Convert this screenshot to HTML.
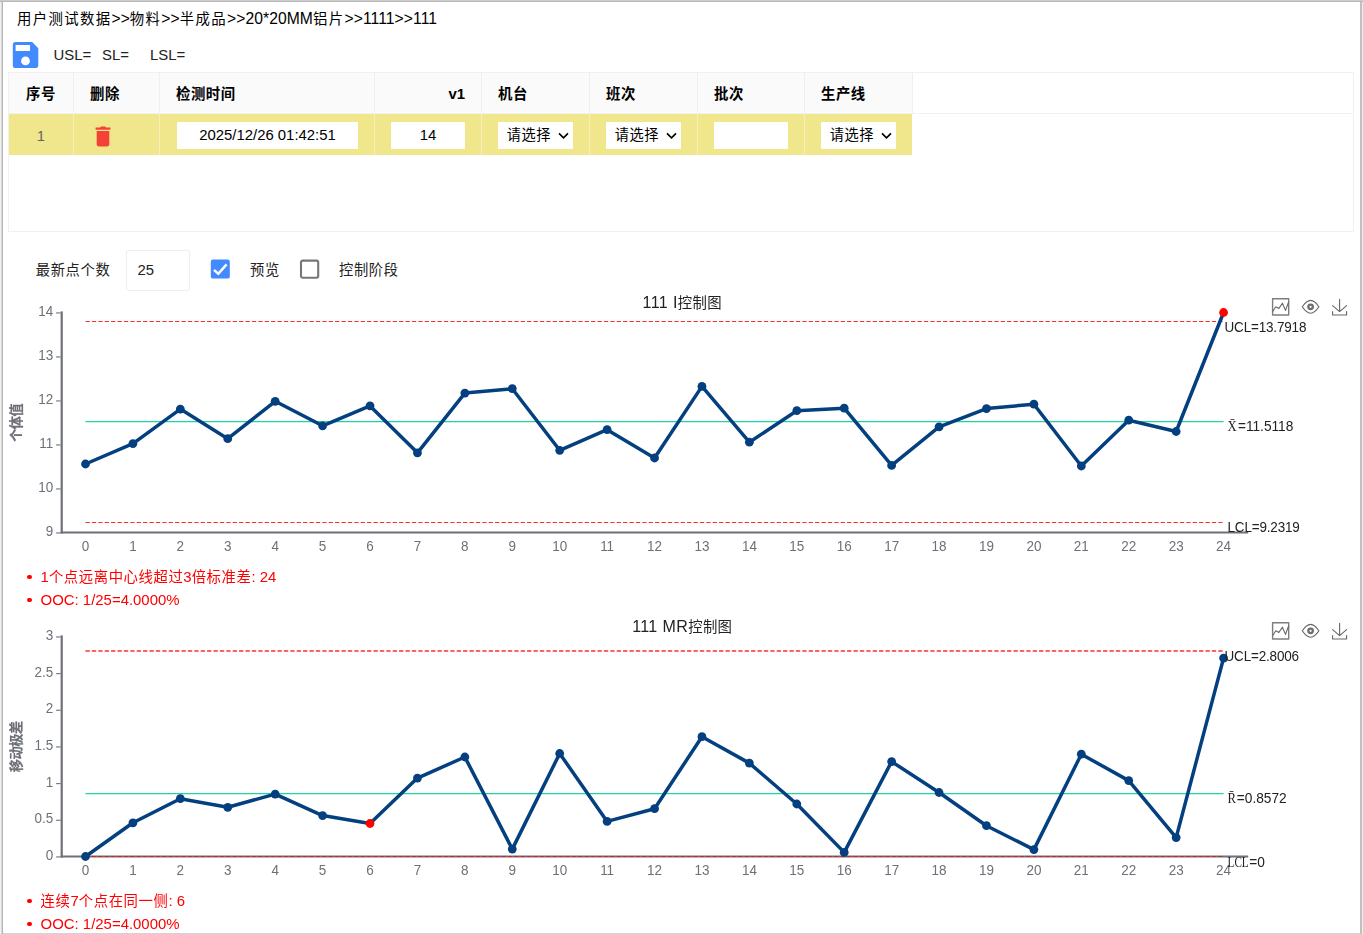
<!DOCTYPE html>
<html lang="zh-CN">
<head>
<meta charset="utf-8">
<title>SPC 控制图</title>
<style>
html,body{margin:0;padding:0;}
body{width:1363px;height:934px;overflow:hidden;background:#fff;position:relative;
 font-family:"Liberation Sans","Noto Sans CJK SC",sans-serif;color:#000;}
.abs{position:absolute;}
.frame{position:absolute;background:#b9b9b9;}
#crumb{left:17px;top:9px;font-size:15.68px;line-height:20px;white-space:nowrap;color:#000;letter-spacing:0.07px;}
.spec{top:45px;font-size:14.93px;line-height:20px;white-space:nowrap;color:#222;}
#tbl{left:8px;top:72px;width:1346px;height:160px;border:1px solid #f0f0f0;box-sizing:border-box;background:#fff;}
.th{position:absolute;top:0;height:41px;background:#fafafa;border-right:1px solid #efefef;border-bottom:1px solid #f2f2f2;box-sizing:border-box;
 font-weight:bold;font-size:14.93px;line-height:42.6px;color:#000;white-space:nowrap;}
.td{position:absolute;top:41px;height:41px;background:#f0e68c;border-right:1px solid #f5efc0;box-sizing:border-box;font-size:14.93px;line-height:43px;color:#666;}
.inp{position:absolute;top:7.8px;height:27.2px;border-radius:1px;background:#fff;color:#000;font-size:14.9px;line-height:27.3px;text-align:center;white-space:nowrap;}
.sel{text-align:left;padding-left:8.4px;box-sizing:border-box;font-size:14.8px;}
.sel svg{position:absolute;right:4.6px;top:10.2px;}
.ctl{top:260px;font-size:14.9px;line-height:20px;white-space:nowrap;color:#222;}
ul.msg{position:absolute;margin:0;padding:0;list-style:none;color:#ff0000;font-size:14.93px;line-height:23.7px;left:25.6px;white-space:nowrap;}
ul.msg li{position:relative;padding-left:15px;height:23.7px;}
ul.msg li:before{content:"";position:absolute;left:1.9px;top:10.1px;width:4.1px;height:4.1px;border-radius:50%;background:#ff0000;}
.c{font-size:0.962em;letter-spacing:0.04em;}
#crumb .c{font-size:0.92em;letter-spacing:0.092em;}
.th .c{font-size:0.965em;letter-spacing:0.036em;}
.ctl .c{font-size:0.96em;letter-spacing:0.042em;}
svg text{font-family:"Liberation Sans","Noto Sans CJK SC",sans-serif;}
.ax{font-size:14.2px;fill:#6E7079;}
.yn{font-size:13.2px;fill:#6E7079;font-weight:bold;stroke:#6E7079;stroke-width:0.2px;}
.yn .c{font-size:13.2px;letter-spacing:-0.5px;}
.tt{font-size:16px;fill:#222;letter-spacing:0.4px;}
.tt .c{font-size:14.4px;letter-spacing:0.3px;}
.ml{font-size:14.2px;fill:#222;letter-spacing:-0.17px;}
.ms{font-size:14.2px;fill:#222;}
svg text.sf{font-family:"Liberation Serif","DejaVu Serif",serif;font-size:13.8px;fill:#222;}
</style>
</head>
<body>
<div class="frame" style="left:0;top:0;width:1363px;height:1px;background:#cdcdcd;"></div>
<div class="frame" style="left:0;top:1px;width:1363px;height:1px;background:#b8b8b8;"></div>
<div class="frame" style="left:0;top:2px;width:1px;height:932px;background:#f1f1f1;"></div>
<div class="frame" style="left:1px;top:2px;width:1px;height:932px;background:#d9d9d9;"></div>
<div class="frame" style="left:2px;top:2px;width:1px;height:932px;background:#b6b6b6;"></div>
<div class="frame" style="left:1360px;top:2px;width:2px;height:932px;background:#c0c0c0;"></div>
<div class="frame" style="left:1362px;top:2px;width:1px;height:932px;background:#ededed;"></div>
<div class="frame" style="left:3px;top:933px;width:1357px;height:1px;background:#d3d3d3;"></div>

<div id="crumb" class="abs"><span class="c">用户测试数据</span>&gt;&gt;<span class="c">物料</span>&gt;&gt;<span class="c">半成品</span>&gt;&gt;20*20MM<span class="c">铝片</span>&gt;&gt;1111&gt;&gt;111</div>

<svg class="abs" style="left:12px;top:41px" width="28" height="28" viewBox="0 0 28 28">
 <path fill="#448aff" d="M3.6 1.1 H20.2 L26.3 7.2 V24.2 Q26.3 27 23.5 27 H3.6 Q0.8 27 0.8 24.2 V3.9 Q0.8 1.1 3.6 1.1 Z M3.6 4 V10 H18 V4 Z M13.5 15.5 A4.4 4.4 0 1 0 13.5 24.3 A4.4 4.4 0 1 0 13.5 15.5 Z" fill-rule="evenodd"/>
</svg>
<div class="abs spec" style="left:53.6px;">USL=</div>
<div class="abs spec" style="left:102px;">SL=</div>
<div class="abs spec" style="left:150px;">LSL=</div>

<div id="tbl" class="abs">
 <div class="th" style="left:0;width:65px;text-align:center;"><span class="c">序号</span></div>
 <div class="th" style="left:65px;width:86px;padding-left:16px;"><span class="c">删除</span></div>
 <div class="th" style="left:151px;width:215px;padding-left:16px;"><span class="c">检测时间</span></div>
 <div class="th" style="left:366px;width:107px;text-align:right;padding-right:16px;">v1</div>
 <div class="th" style="left:473px;width:108px;padding-left:16px;"><span class="c">机台</span></div>
 <div class="th" style="left:581px;width:108px;padding-left:16px;"><span class="c">班次</span></div>
 <div class="th" style="left:689px;width:107px;padding-left:16px;"><span class="c">批次</span></div>
 <div class="th" style="left:796px;width:108px;padding-left:16px;"><span class="c">生产线</span></div>
 <div class="abs" style="left:904px;top:40px;width:440px;height:1px;background:#f2f2f2;"></div>

 <div class="td" style="left:0;width:65px;text-align:center;">1</div>
 <div class="td" style="left:65px;width:86px;">
  <svg class="abs" style="left:18.5px;top:11.8px" width="20" height="22" viewBox="0 0 20 22"><path fill="#f44336" d="M2.6 1.6 H7 L8 0.5 H12 L13 1.6 H17.4 V3.8 H2.6 Z M3.7 5 H16.3 V18.2 Q16.3 20.6 13.9 20.6 H6.1 Q3.7 20.6 3.7 18.2 Z"/></svg>
 </div>
 <div class="td" style="left:151px;width:215px;"><div class="inp" style="left:17px;width:181px;">2025/12/26 01:42:51</div></div>
 <div class="td" style="left:366px;width:107px;"><div class="inp" style="left:16px;width:74px;">14</div></div>
 <div class="td" style="left:473px;width:108px;"><div class="inp sel" style="left:16.3px;width:74.9px;"><span class="c">请选择</span><svg width="11" height="8" viewBox="0 0 11 8"><path d="M1 1.4 L5.5 5.9 L10 1.4" fill="none" stroke="#000" stroke-width="1.6"/></svg></div></div>
 <div class="td" style="left:581px;width:108px;"><div class="inp sel" style="left:16.3px;width:74.9px;"><span class="c">请选择</span><svg width="11" height="8" viewBox="0 0 11 8"><path d="M1 1.4 L5.5 5.9 L10 1.4" fill="none" stroke="#000" stroke-width="1.6"/></svg></div></div>
 <div class="td" style="left:689px;width:107px;"><div class="inp" style="left:16px;width:74px;"></div></div>
 <div class="td" style="left:796px;width:107.2px;border-right:0;"><div class="inp sel" style="left:16.3px;width:74.9px;"><span class="c">请选择</span><svg width="11" height="8" viewBox="0 0 11 8"><path d="M1 1.4 L5.5 5.9 L10 1.4" fill="none" stroke="#000" stroke-width="1.6"/></svg></div></div>
</div>

<div class="abs ctl" style="left:35.8px;"><span class="c">最新点个数</span></div>
<div class="abs" style="left:126.4px;top:250.2px;width:63.4px;height:40.6px;border:1px solid #eee;border-radius:3px;box-sizing:border-box;font-size:14.9px;line-height:39.6px;padding-left:10px;color:#222;">25</div>
<svg class="abs" style="left:210px;top:259.4px" width="21" height="21" viewBox="0 0 21 21"><rect x="0.8" y="0.6" width="19" height="19" rx="2.2" fill="#448aff"/><path d="M4 10.8 L8.3 14.8 L16.6 5.4" fill="none" stroke="#fff" stroke-width="2.5"/></svg>
<div class="abs ctl" style="left:250px;"><span class="c">预览</span></div>
<svg class="abs" style="left:299px;top:259.4px" width="21" height="21" viewBox="0 0 21 21"><rect x="2" y="1.6" width="17.2" height="17.2" rx="1.7" fill="#fff" stroke="#767676" stroke-width="2.1"/></svg>
<div class="abs ctl" style="left:339px;"><span class="c">控制阶段</span></div>

<svg class="abs" style="left:0;top:0;will-change:transform;" width="1363" height="934" viewBox="0 0 1363 934">
<line x1="85.50" y1="321.50" x2="1223.58" y2="321.50" stroke="#ff2a2a" stroke-width="1" stroke-dasharray="4.27 2.13"/>
<line x1="85.50" y1="421.68" x2="1223.58" y2="421.68" stroke="#1dd6a4" stroke-width="1.25"/>
<line x1="61.7" y1="311.40" x2="61.7" y2="533.60" stroke="#6E7079" stroke-width="2.2"/>
<line x1="60.60" y1="532.5" x2="1248.2" y2="532.5" stroke="#6E7079" stroke-width="2.2"/>
<line x1="85.50" y1="522.50" x2="1223.58" y2="522.50" stroke="#ff2a2a" stroke-width="1" stroke-dasharray="4.27 2.13"/>
<line x1="56.10" y1="532.95" x2="60.60" y2="532.95" stroke="#6E7079" stroke-width="1.1"/>
<text transform="translate(53.20 536.15) scale(0.95 1)" text-anchor="end" class="ax">9</text>
<line x1="56.10" y1="488.95" x2="60.60" y2="488.95" stroke="#6E7079" stroke-width="1.1"/>
<text transform="translate(53.20 492.15) scale(0.95 1)" text-anchor="end" class="ax">10</text>
<line x1="56.10" y1="444.95" x2="60.60" y2="444.95" stroke="#6E7079" stroke-width="1.1"/>
<text transform="translate(53.20 448.15) scale(0.95 1)" text-anchor="end" class="ax">11</text>
<line x1="56.10" y1="400.95" x2="60.60" y2="400.95" stroke="#6E7079" stroke-width="1.1"/>
<text transform="translate(53.20 404.15) scale(0.95 1)" text-anchor="end" class="ax">12</text>
<line x1="56.10" y1="356.95" x2="60.60" y2="356.95" stroke="#6E7079" stroke-width="1.1"/>
<text transform="translate(53.20 360.15) scale(0.95 1)" text-anchor="end" class="ax">13</text>
<line x1="56.10" y1="312.95" x2="60.60" y2="312.95" stroke="#6E7079" stroke-width="1.1"/>
<text transform="translate(53.20 316.15) scale(0.95 1)" text-anchor="end" class="ax">14</text>
<text transform="translate(85.50 550.90) scale(0.95 1)" text-anchor="middle" class="ax">0</text>
<text transform="translate(132.92 550.90) scale(0.95 1)" text-anchor="middle" class="ax">1</text>
<text transform="translate(180.34 550.90) scale(0.95 1)" text-anchor="middle" class="ax">2</text>
<text transform="translate(227.76 550.90) scale(0.95 1)" text-anchor="middle" class="ax">3</text>
<text transform="translate(275.18 550.90) scale(0.95 1)" text-anchor="middle" class="ax">4</text>
<text transform="translate(322.60 550.90) scale(0.95 1)" text-anchor="middle" class="ax">5</text>
<text transform="translate(370.02 550.90) scale(0.95 1)" text-anchor="middle" class="ax">6</text>
<text transform="translate(417.44 550.90) scale(0.95 1)" text-anchor="middle" class="ax">7</text>
<text transform="translate(464.86 550.90) scale(0.95 1)" text-anchor="middle" class="ax">8</text>
<text transform="translate(512.28 550.90) scale(0.95 1)" text-anchor="middle" class="ax">9</text>
<text transform="translate(559.70 550.90) scale(0.95 1)" text-anchor="middle" class="ax">10</text>
<text transform="translate(607.12 550.90) scale(0.95 1)" text-anchor="middle" class="ax">11</text>
<text transform="translate(654.54 550.90) scale(0.95 1)" text-anchor="middle" class="ax">12</text>
<text transform="translate(701.96 550.90) scale(0.95 1)" text-anchor="middle" class="ax">13</text>
<text transform="translate(749.38 550.90) scale(0.95 1)" text-anchor="middle" class="ax">14</text>
<text transform="translate(796.80 550.90) scale(0.95 1)" text-anchor="middle" class="ax">15</text>
<text transform="translate(844.22 550.90) scale(0.95 1)" text-anchor="middle" class="ax">16</text>
<text transform="translate(891.64 550.90) scale(0.95 1)" text-anchor="middle" class="ax">17</text>
<text transform="translate(939.06 550.90) scale(0.95 1)" text-anchor="middle" class="ax">18</text>
<text transform="translate(986.48 550.90) scale(0.95 1)" text-anchor="middle" class="ax">19</text>
<text transform="translate(1033.90 550.90) scale(0.95 1)" text-anchor="middle" class="ax">20</text>
<text transform="translate(1081.32 550.90) scale(0.95 1)" text-anchor="middle" class="ax">21</text>
<text transform="translate(1128.74 550.90) scale(0.95 1)" text-anchor="middle" class="ax">22</text>
<text transform="translate(1176.16 550.90) scale(0.95 1)" text-anchor="middle" class="ax">23</text>
<text transform="translate(1223.58 550.90) scale(0.95 1)" text-anchor="middle" class="ax">24</text>
<text transform="translate(21.3 422.8) rotate(-90)" text-anchor="middle" class="yn"><tspan class="c">个体值</tspan></text>
<text x="682.2" y="308" text-anchor="middle" class="tt">111 I<tspan class="c">控制图</tspan></text>
<polyline points="85.50,464.00 132.92,443.60 180.34,409.10 227.76,438.70 275.18,401.30 322.60,425.80 370.02,405.90 417.44,452.80 464.86,393.10 512.28,388.70 559.70,450.30 607.12,429.70 654.54,458.00 701.96,386.40 749.38,442.20 796.80,410.70 844.22,408.20 891.64,465.40 939.06,426.90 986.48,408.60 1033.90,404.20 1081.32,466.00 1128.74,420.20 1176.16,431.50 1223.58,312.50" fill="none" stroke="#04407f" stroke-width="3.5" stroke-linejoin="bevel"/>
<circle cx="85.50" cy="464.00" r="4.4" fill="#04407f"/>
<circle cx="132.92" cy="443.60" r="4.4" fill="#04407f"/>
<circle cx="180.34" cy="409.10" r="4.4" fill="#04407f"/>
<circle cx="227.76" cy="438.70" r="4.4" fill="#04407f"/>
<circle cx="275.18" cy="401.30" r="4.4" fill="#04407f"/>
<circle cx="322.60" cy="425.80" r="4.4" fill="#04407f"/>
<circle cx="370.02" cy="405.90" r="4.4" fill="#04407f"/>
<circle cx="417.44" cy="452.80" r="4.4" fill="#04407f"/>
<circle cx="464.86" cy="393.10" r="4.4" fill="#04407f"/>
<circle cx="512.28" cy="388.70" r="4.4" fill="#04407f"/>
<circle cx="559.70" cy="450.30" r="4.4" fill="#04407f"/>
<circle cx="607.12" cy="429.70" r="4.4" fill="#04407f"/>
<circle cx="654.54" cy="458.00" r="4.4" fill="#04407f"/>
<circle cx="701.96" cy="386.40" r="4.4" fill="#04407f"/>
<circle cx="749.38" cy="442.20" r="4.4" fill="#04407f"/>
<circle cx="796.80" cy="410.70" r="4.4" fill="#04407f"/>
<circle cx="844.22" cy="408.20" r="4.4" fill="#04407f"/>
<circle cx="891.64" cy="465.40" r="4.4" fill="#04407f"/>
<circle cx="939.06" cy="426.90" r="4.4" fill="#04407f"/>
<circle cx="986.48" cy="408.60" r="4.4" fill="#04407f"/>
<circle cx="1033.90" cy="404.20" r="4.4" fill="#04407f"/>
<circle cx="1081.32" cy="466.00" r="4.4" fill="#04407f"/>
<circle cx="1128.74" cy="420.20" r="4.4" fill="#04407f"/>
<circle cx="1176.16" cy="431.50" r="4.4" fill="#04407f"/>
<circle cx="1223.58" cy="312.50" r="4.4" fill="#ff0000"/>
<text transform="translate(1224.50 332.20) scale(0.95 1)" text-anchor="start" class="ml">UCL=13.7918</text>
<g class="lbl"><text transform="translate(1227.60 430.80) scale(0.92 1)" text-anchor="start" class="sf">X&#772;</text><text transform="translate(1237.90 430.80) scale(0.965 1)" text-anchor="start" class="ms">=11.5118</text></g>
<text transform="translate(1227.50 532.00) scale(0.95 1)" text-anchor="start" class="ml">LCL=9.2319</text>
<g fill="none" stroke="#666" stroke-width="1.1" stroke-linecap="round" stroke-linejoin="round" transform="translate(0 0)"><rect x="1272.6" y="298.8" width="16.1" height="16.2" stroke-width="1.4" stroke="#7d7d7d"/><polyline points="1272.9,311.2 1275.8,306.8 1278.9,308.4 1282.4,303.2 1285.5,310.4 1288.5,302.2"/><path d="M1302.3,306.8 C1304.6,303.3 1307.3,300.4 1310.6,300.4 C1313.9,300.4 1316.6,303.3 1318.9,306.8 C1316.6,310.3 1313.9,313.2 1310.6,313.2 C1307.3,313.2 1304.6,310.3 1302.3,306.8Z"/><circle cx="1310.6" cy="306.8" r="2.25" stroke-width="2.3" stroke="#6e6e6e"/><path d="M1332.6,305.6 L1339.6,311.6 L1346.6,305.6 M1339.6,311.4 V299.2 M1332.6,311.6 V315 H1346.6 V311.6"/></g>
<line x1="85.50" y1="651.00" x2="1223.58" y2="651.00" stroke="#ff6464" stroke-width="2" stroke-dasharray="4.27 2.13"/>
<line x1="85.50" y1="793.63" x2="1223.58" y2="793.63" stroke="#1dd6a4" stroke-width="1.25"/>
<line x1="61.7" y1="635.40" x2="61.7" y2="857.60" stroke="#6E7079" stroke-width="2.2"/>
<line x1="60.60" y1="856.5" x2="1248.2" y2="856.5" stroke="#6E7079" stroke-width="2.2"/>
<line x1="85.50" y1="856.50" x2="1223.58" y2="856.50" stroke="#e01c1c" stroke-width="1" stroke-dasharray="4.27 2.13"/>
<line x1="56.10" y1="856.95" x2="60.60" y2="856.95" stroke="#6E7079" stroke-width="1.1"/>
<text transform="translate(53.20 860.15) scale(0.95 1)" text-anchor="end" class="ax">0</text>
<line x1="56.10" y1="820.28" x2="60.60" y2="820.28" stroke="#6E7079" stroke-width="1.1"/>
<text transform="translate(53.20 823.48) scale(0.95 1)" text-anchor="end" class="ax">0.5</text>
<line x1="56.10" y1="783.62" x2="60.60" y2="783.62" stroke="#6E7079" stroke-width="1.1"/>
<text transform="translate(53.20 786.82) scale(0.95 1)" text-anchor="end" class="ax">1</text>
<line x1="56.10" y1="746.95" x2="60.60" y2="746.95" stroke="#6E7079" stroke-width="1.1"/>
<text transform="translate(53.20 750.15) scale(0.95 1)" text-anchor="end" class="ax">1.5</text>
<line x1="56.10" y1="710.28" x2="60.60" y2="710.28" stroke="#6E7079" stroke-width="1.1"/>
<text transform="translate(53.20 713.48) scale(0.95 1)" text-anchor="end" class="ax">2</text>
<line x1="56.10" y1="673.62" x2="60.60" y2="673.62" stroke="#6E7079" stroke-width="1.1"/>
<text transform="translate(53.20 676.82) scale(0.95 1)" text-anchor="end" class="ax">2.5</text>
<line x1="56.10" y1="636.95" x2="60.60" y2="636.95" stroke="#6E7079" stroke-width="1.1"/>
<text transform="translate(53.20 640.15) scale(0.95 1)" text-anchor="end" class="ax">3</text>
<text transform="translate(85.50 874.90) scale(0.95 1)" text-anchor="middle" class="ax">0</text>
<text transform="translate(132.92 874.90) scale(0.95 1)" text-anchor="middle" class="ax">1</text>
<text transform="translate(180.34 874.90) scale(0.95 1)" text-anchor="middle" class="ax">2</text>
<text transform="translate(227.76 874.90) scale(0.95 1)" text-anchor="middle" class="ax">3</text>
<text transform="translate(275.18 874.90) scale(0.95 1)" text-anchor="middle" class="ax">4</text>
<text transform="translate(322.60 874.90) scale(0.95 1)" text-anchor="middle" class="ax">5</text>
<text transform="translate(370.02 874.90) scale(0.95 1)" text-anchor="middle" class="ax">6</text>
<text transform="translate(417.44 874.90) scale(0.95 1)" text-anchor="middle" class="ax">7</text>
<text transform="translate(464.86 874.90) scale(0.95 1)" text-anchor="middle" class="ax">8</text>
<text transform="translate(512.28 874.90) scale(0.95 1)" text-anchor="middle" class="ax">9</text>
<text transform="translate(559.70 874.90) scale(0.95 1)" text-anchor="middle" class="ax">10</text>
<text transform="translate(607.12 874.90) scale(0.95 1)" text-anchor="middle" class="ax">11</text>
<text transform="translate(654.54 874.90) scale(0.95 1)" text-anchor="middle" class="ax">12</text>
<text transform="translate(701.96 874.90) scale(0.95 1)" text-anchor="middle" class="ax">13</text>
<text transform="translate(749.38 874.90) scale(0.95 1)" text-anchor="middle" class="ax">14</text>
<text transform="translate(796.80 874.90) scale(0.95 1)" text-anchor="middle" class="ax">15</text>
<text transform="translate(844.22 874.90) scale(0.95 1)" text-anchor="middle" class="ax">16</text>
<text transform="translate(891.64 874.90) scale(0.95 1)" text-anchor="middle" class="ax">17</text>
<text transform="translate(939.06 874.90) scale(0.95 1)" text-anchor="middle" class="ax">18</text>
<text transform="translate(986.48 874.90) scale(0.95 1)" text-anchor="middle" class="ax">19</text>
<text transform="translate(1033.90 874.90) scale(0.95 1)" text-anchor="middle" class="ax">20</text>
<text transform="translate(1081.32 874.90) scale(0.95 1)" text-anchor="middle" class="ax">21</text>
<text transform="translate(1128.74 874.90) scale(0.95 1)" text-anchor="middle" class="ax">22</text>
<text transform="translate(1176.16 874.90) scale(0.95 1)" text-anchor="middle" class="ax">23</text>
<text transform="translate(1223.58 874.90) scale(0.95 1)" text-anchor="middle" class="ax">24</text>
<text transform="translate(21.3 746.8) rotate(-90)" text-anchor="middle" class="yn"><tspan class="c">移动极差</tspan></text>
<text x="682.2" y="632" text-anchor="middle" class="tt">111 MR<tspan class="c">控制图</tspan></text>
<polyline points="85.50,856.50 132.92,822.80 180.34,798.70 227.76,807.30 275.18,794.10 322.60,815.60 370.02,823.50 417.44,778.10 464.86,757.00 512.28,849.10 559.70,753.50 607.12,821.40 654.54,808.70 701.96,736.70 749.38,763.10 796.80,804.00 844.22,852.40 891.64,761.60 939.06,792.50 986.48,825.70 1033.90,849.60 1081.32,754.20 1128.74,780.60 1176.16,837.60 1223.58,658.10" fill="none" stroke="#04407f" stroke-width="3.5" stroke-linejoin="bevel"/>
<circle cx="85.50" cy="856.50" r="4.4" fill="#04407f"/>
<circle cx="132.92" cy="822.80" r="4.4" fill="#04407f"/>
<circle cx="180.34" cy="798.70" r="4.4" fill="#04407f"/>
<circle cx="227.76" cy="807.30" r="4.4" fill="#04407f"/>
<circle cx="275.18" cy="794.10" r="4.4" fill="#04407f"/>
<circle cx="322.60" cy="815.60" r="4.4" fill="#04407f"/>
<circle cx="370.02" cy="823.50" r="4.4" fill="#ff0000"/>
<circle cx="417.44" cy="778.10" r="4.4" fill="#04407f"/>
<circle cx="464.86" cy="757.00" r="4.4" fill="#04407f"/>
<circle cx="512.28" cy="849.10" r="4.4" fill="#04407f"/>
<circle cx="559.70" cy="753.50" r="4.4" fill="#04407f"/>
<circle cx="607.12" cy="821.40" r="4.4" fill="#04407f"/>
<circle cx="654.54" cy="808.70" r="4.4" fill="#04407f"/>
<circle cx="701.96" cy="736.70" r="4.4" fill="#04407f"/>
<circle cx="749.38" cy="763.10" r="4.4" fill="#04407f"/>
<circle cx="796.80" cy="804.00" r="4.4" fill="#04407f"/>
<circle cx="844.22" cy="852.40" r="4.4" fill="#04407f"/>
<circle cx="891.64" cy="761.60" r="4.4" fill="#04407f"/>
<circle cx="939.06" cy="792.50" r="4.4" fill="#04407f"/>
<circle cx="986.48" cy="825.70" r="4.4" fill="#04407f"/>
<circle cx="1033.90" cy="849.60" r="4.4" fill="#04407f"/>
<circle cx="1081.32" cy="754.20" r="4.4" fill="#04407f"/>
<circle cx="1128.74" cy="780.60" r="4.4" fill="#04407f"/>
<circle cx="1176.16" cy="837.60" r="4.4" fill="#04407f"/>
<circle cx="1223.58" cy="658.10" r="4.4" fill="#04407f"/>
<text transform="translate(1224.50 661.00) scale(0.95 1)" text-anchor="start" class="ml">UCL=2.8006</text>
<g class="lbl"><text transform="translate(1227.60 803.00) scale(0.92 1)" text-anchor="start" class="sf">R&#772;</text><text transform="translate(1236.80 803.00) scale(0.965 1)" text-anchor="start" class="ms">=0.8572</text></g>
<g class="lbl"><text transform="translate(1227.60 866.60) scale(0.81 1)" text-anchor="start" class="sf">LCL</text><text transform="translate(1249.30 866.60) scale(0.965 1)" text-anchor="start" class="ms">=0</text></g>
<g fill="none" stroke="#666" stroke-width="1.1" stroke-linecap="round" stroke-linejoin="round" transform="translate(0 324)"><rect x="1272.6" y="298.8" width="16.1" height="16.2" stroke-width="1.4" stroke="#7d7d7d"/><polyline points="1272.9,311.2 1275.8,306.8 1278.9,308.4 1282.4,303.2 1285.5,310.4 1288.5,302.2"/><path d="M1302.3,306.8 C1304.6,303.3 1307.3,300.4 1310.6,300.4 C1313.9,300.4 1316.6,303.3 1318.9,306.8 C1316.6,310.3 1313.9,313.2 1310.6,313.2 C1307.3,313.2 1304.6,310.3 1302.3,306.8Z"/><circle cx="1310.6" cy="306.8" r="2.25" stroke-width="2.3" stroke="#6e6e6e"/><path d="M1332.6,305.6 L1339.6,311.6 L1346.6,305.6 M1339.6,311.4 V299.2 M1332.6,311.6 V315 H1346.6 V311.6"/></g>
</svg>

<ul class="msg" style="top:564.5px;"><li>1<span class="c">个点远离中心线超过</span>3<span class="c">倍标准差</span>: 24</li><li>OOC: 1/25=4.0000%</li></ul>
<ul class="msg" style="top:888.5px;"><li><span class="c">连续</span>7<span class="c">个点在同一侧</span>: 6</li><li>OOC: 1/25=4.0000%</li></ul>
</body>
</html>
